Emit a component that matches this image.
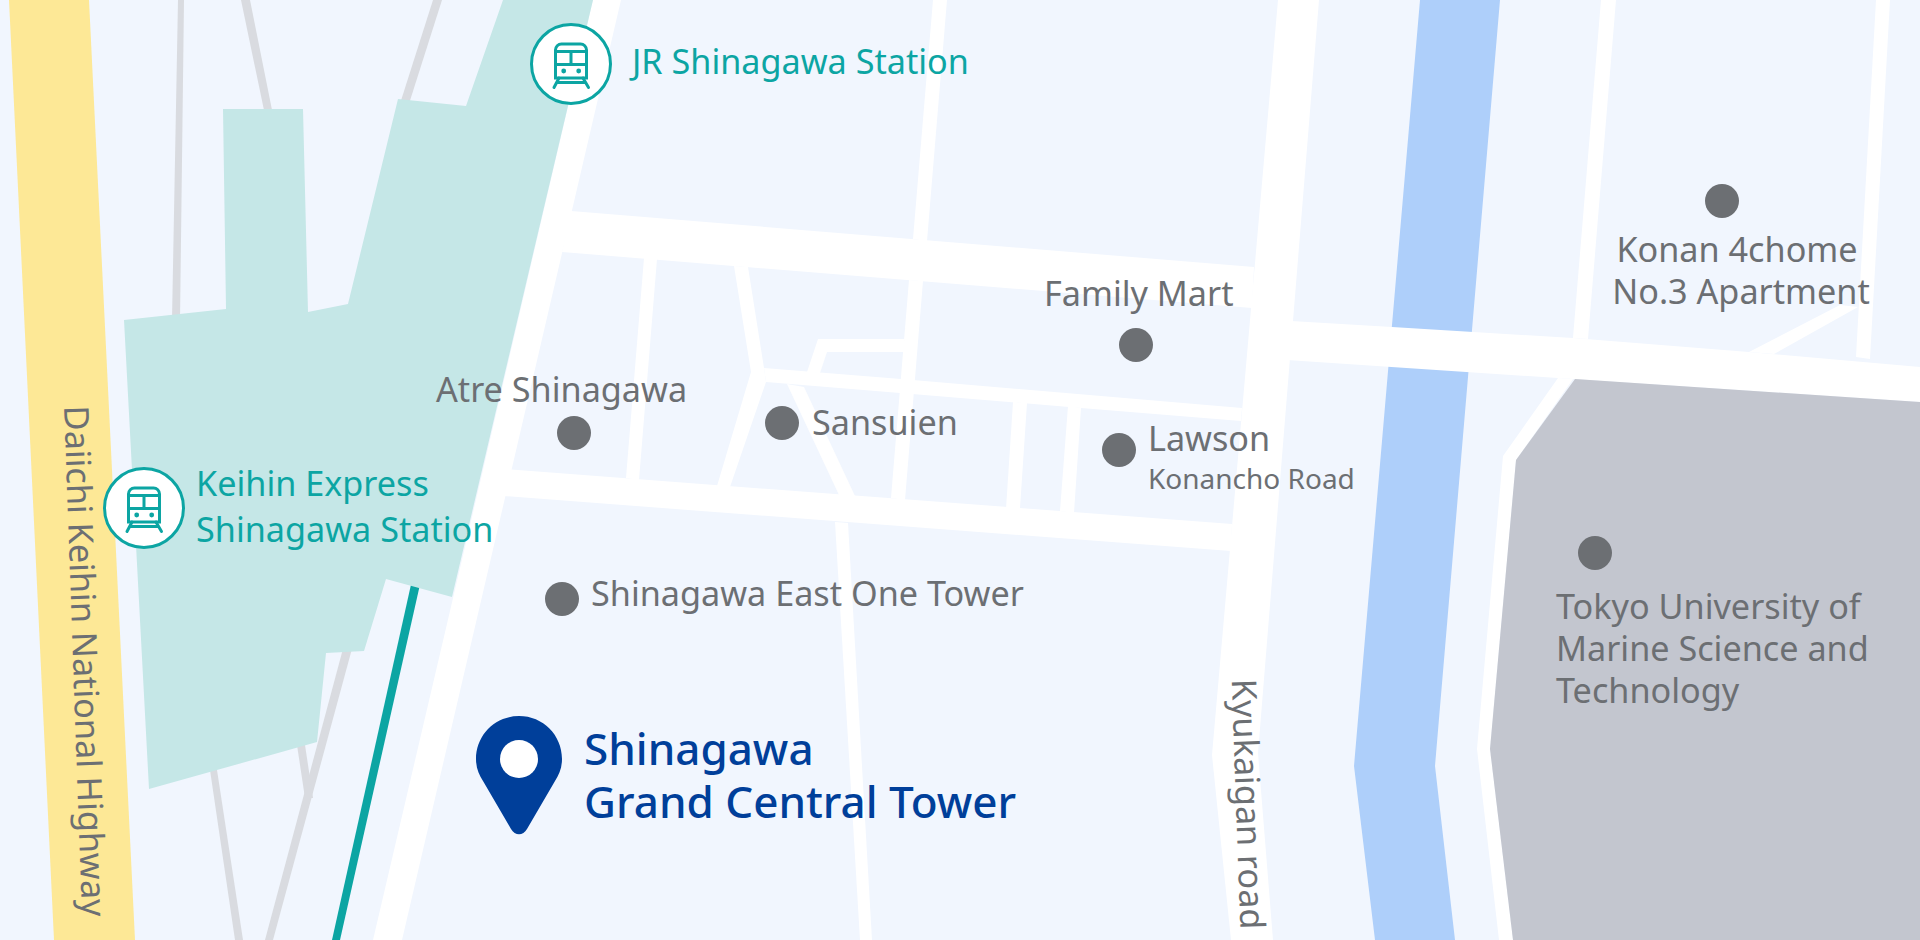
const TEAL = "#0ca5a3";

const ROADS = [
  // main diagonal + big crossings
  "593,0 621,0 402,940 373,940",
  "571,211 1254,267 1252,308 562,252",
  "1278,0 1319,0 1258,753 1273,940 1231,940 1212,755",
  "1291,321 1392,327 1573,338 1749,352 1920,367 1920,402 1573,379 1287,360",
  "490,468 1232,524 1231,551 490,495",
  "764,368 901,379 1242,408 1241,421 1081,408 900,393 766,382",
  // small streets
  "933,0 947,0 927,241 913,239",
  "644,258 657,259 639,480 626,478",
  "734,266 748,267 764,368 766,382 730,487 717,486 751,372",
  "909,280 923,281 905,500 891,498",
  "787,384 804,387 855,496 839,495",
  "1013,402 1027,403 1020,508 1006,509",
  "1068,406 1081,408 1074,513 1060,511",
  "835,522 848,523 872,940 860,940",
  "818,339 904,339 904,352 827,352 820,373 807,372",
  "1601,0 1616,0 1588,339 1573,338",
  "1876,0 1890,0 1870,359 1856,357",
  "1749,352 1774,354 1858,307 1840,305",
  "1558,378 1573,379 1516,460 1490,749 1513,940 1499,940 1477,749 1503,456",
];

const RAILS = [
  "178,0 184,0 180,320 172,320",
  "241,0 250,0 273,115 265,115",
  "433,0 442,0 407,110 398,110",
  "210,770 217,770 243,940 235,940",
  "344,645 353,645 273,940 265,940",
  "297,745 305,745 313,798 305,798",
];

function MapShapes() {
  return (
    <svg className="absolute inset-0" width="1920" height="940" viewBox="0 0 1920 940">
      <polygon points="9,0 89,0 135,940 54,940" fill="#fde896" />
      <polygon points="1420,0 1500,0 1435,766 1455,940 1375,940 1354,766" fill="#aecffa" />
      {ROADS.map((p) => (
        <polygon key={p} points={p} fill="#ffffff" />
      ))}
      {RAILS.map((p) => (
        <polygon key={p} points={p} fill="#d9dbe0" />
      ))}
      <polygon points="412,580 421,580 340,940 332,940" fill={TEAL} />
      <polygon
        points="503,0 593,0 452,597 386,579 364,651 326,653 317,742 149,789 124,320 226,309 223,109 303,109 308,312 348,304 398,99 466,106"
        fill="#c5e7e7"
      />
      <polygon points="1575,379 1920,402 1920,940 1513,940 1490,749 1516,460" fill="#c3c6cf" />
      <path
        d="M519 716C543 716 562 735 562 759C562 768 559 775 555 781L527 829C523 836 515 836 511 829L483 781C479 775 476 768 476 759C476 735 495 716 519 716Z"
        fill="#003f9a"
      />
      <circle cx="519" cy="759" r="19" fill="#ffffff" />
      {[
        [574, 433],
        [782, 423],
        [562, 599],
        [1119, 450],
        [1136, 345],
        [1722, 201],
        [1595, 553],
      ].map(([x, y]) => (
        <circle key={x} cx={x} cy={y} r="17" fill="#6c6f73" />
      ))}
    </svg>
  );
}

function TrainIcon() {
  return (
    <svg width="82" height="82" viewBox="0 0 82 82" fill="none" stroke={TEAL} strokeWidth="3" strokeLinecap="round">
      <circle cx="41" cy="41" r="39.5" fill="#ffffff" />
      <path d="M25.5 55V27a6 6 0 0 1 6-6H50.5a6 6 0 0 1 6 6V55Z" />
      <path d="M25.5 28.5H56.5M25.5 41.5H56.5M41 28.5V41.5" />
      <path d="M29 55L24 64.5M53 55L58.5 64.5M27 59.5H55" />
      <circle cx="33.7" cy="48" r="2.4" fill={TEAL} stroke="none" />
      <circle cx="48.7" cy="48" r="2.4" fill={TEAL} stroke="none" />
    </svg>
  );
}

export default function App() {
  return (
    <div className="relative w-[1920px] h-[940px] overflow-hidden bg-[#f1f6fe] font-['Noto_Sans',sans-serif] text-[34.2px] leading-[42px] text-[#6c6f73]">
      <MapShapes />

      {/* stations */}
      <div className="absolute left-[530px] top-[23px]">
        <TrainIcon />
      </div>
      <div className="absolute left-[103px] top-[467px]">
        <TrainIcon />
      </div>
      <div className="absolute left-[632px] top-[40px] text-[#0ca5a3]">JR Shinagawa Station</div>
      <div className="absolute left-[196px] top-[460px] leading-[46px] text-[#0ca5a3]">
        Keihin Express
        <br />
        Shinagawa Station
      </div>

      {/* places */}
      <div className="absolute left-[436px] top-[368px]">Atre Shinagawa</div>
      <div className="absolute left-[812px] top-[401px]">Sansuien</div>
      <div className="absolute left-[1044px] top-[272px]">Family Mart</div>
      <div className="absolute left-[1148px] top-[417px]">Lawson</div>
      <div className="absolute left-[1148px] top-[460px] text-[28px] leading-[36px]">Konancho Road</div>
      <div className="absolute left-[591px] top-[572px]">Shinagawa East One Tower</div>
      <div className="absolute left-[1541px] top-[228px] w-[400px] text-center">
        <span className="relative -left-[4px]">Konan 4chome</span>
        <br />
        No.3 Apartment
      </div>
      <div className="absolute left-[1556px] top-[585px]">
        Tokyo University of
        <br />
        Marine Science and
        <br />
        Technology
      </div>

      {/* destination */}
      <div className="absolute left-[584px] top-[722px] text-[44px] leading-[53px] font-medium text-[#003f9a]">
        Shinagawa
        <br />
        Grand Central Tower
      </div>

      {/* road names */}
      <div className="absolute left-[-214px] top-[640px] w-[600px] text-center rotate-[88deg]">
        Daiichi Keihin National Highway
      </div>
      <div className="absolute left-[1049px] top-[783px] w-[400px] text-center rotate-[88deg]">
        Kyukaigan road
      </div>
    </div>
  );
}
